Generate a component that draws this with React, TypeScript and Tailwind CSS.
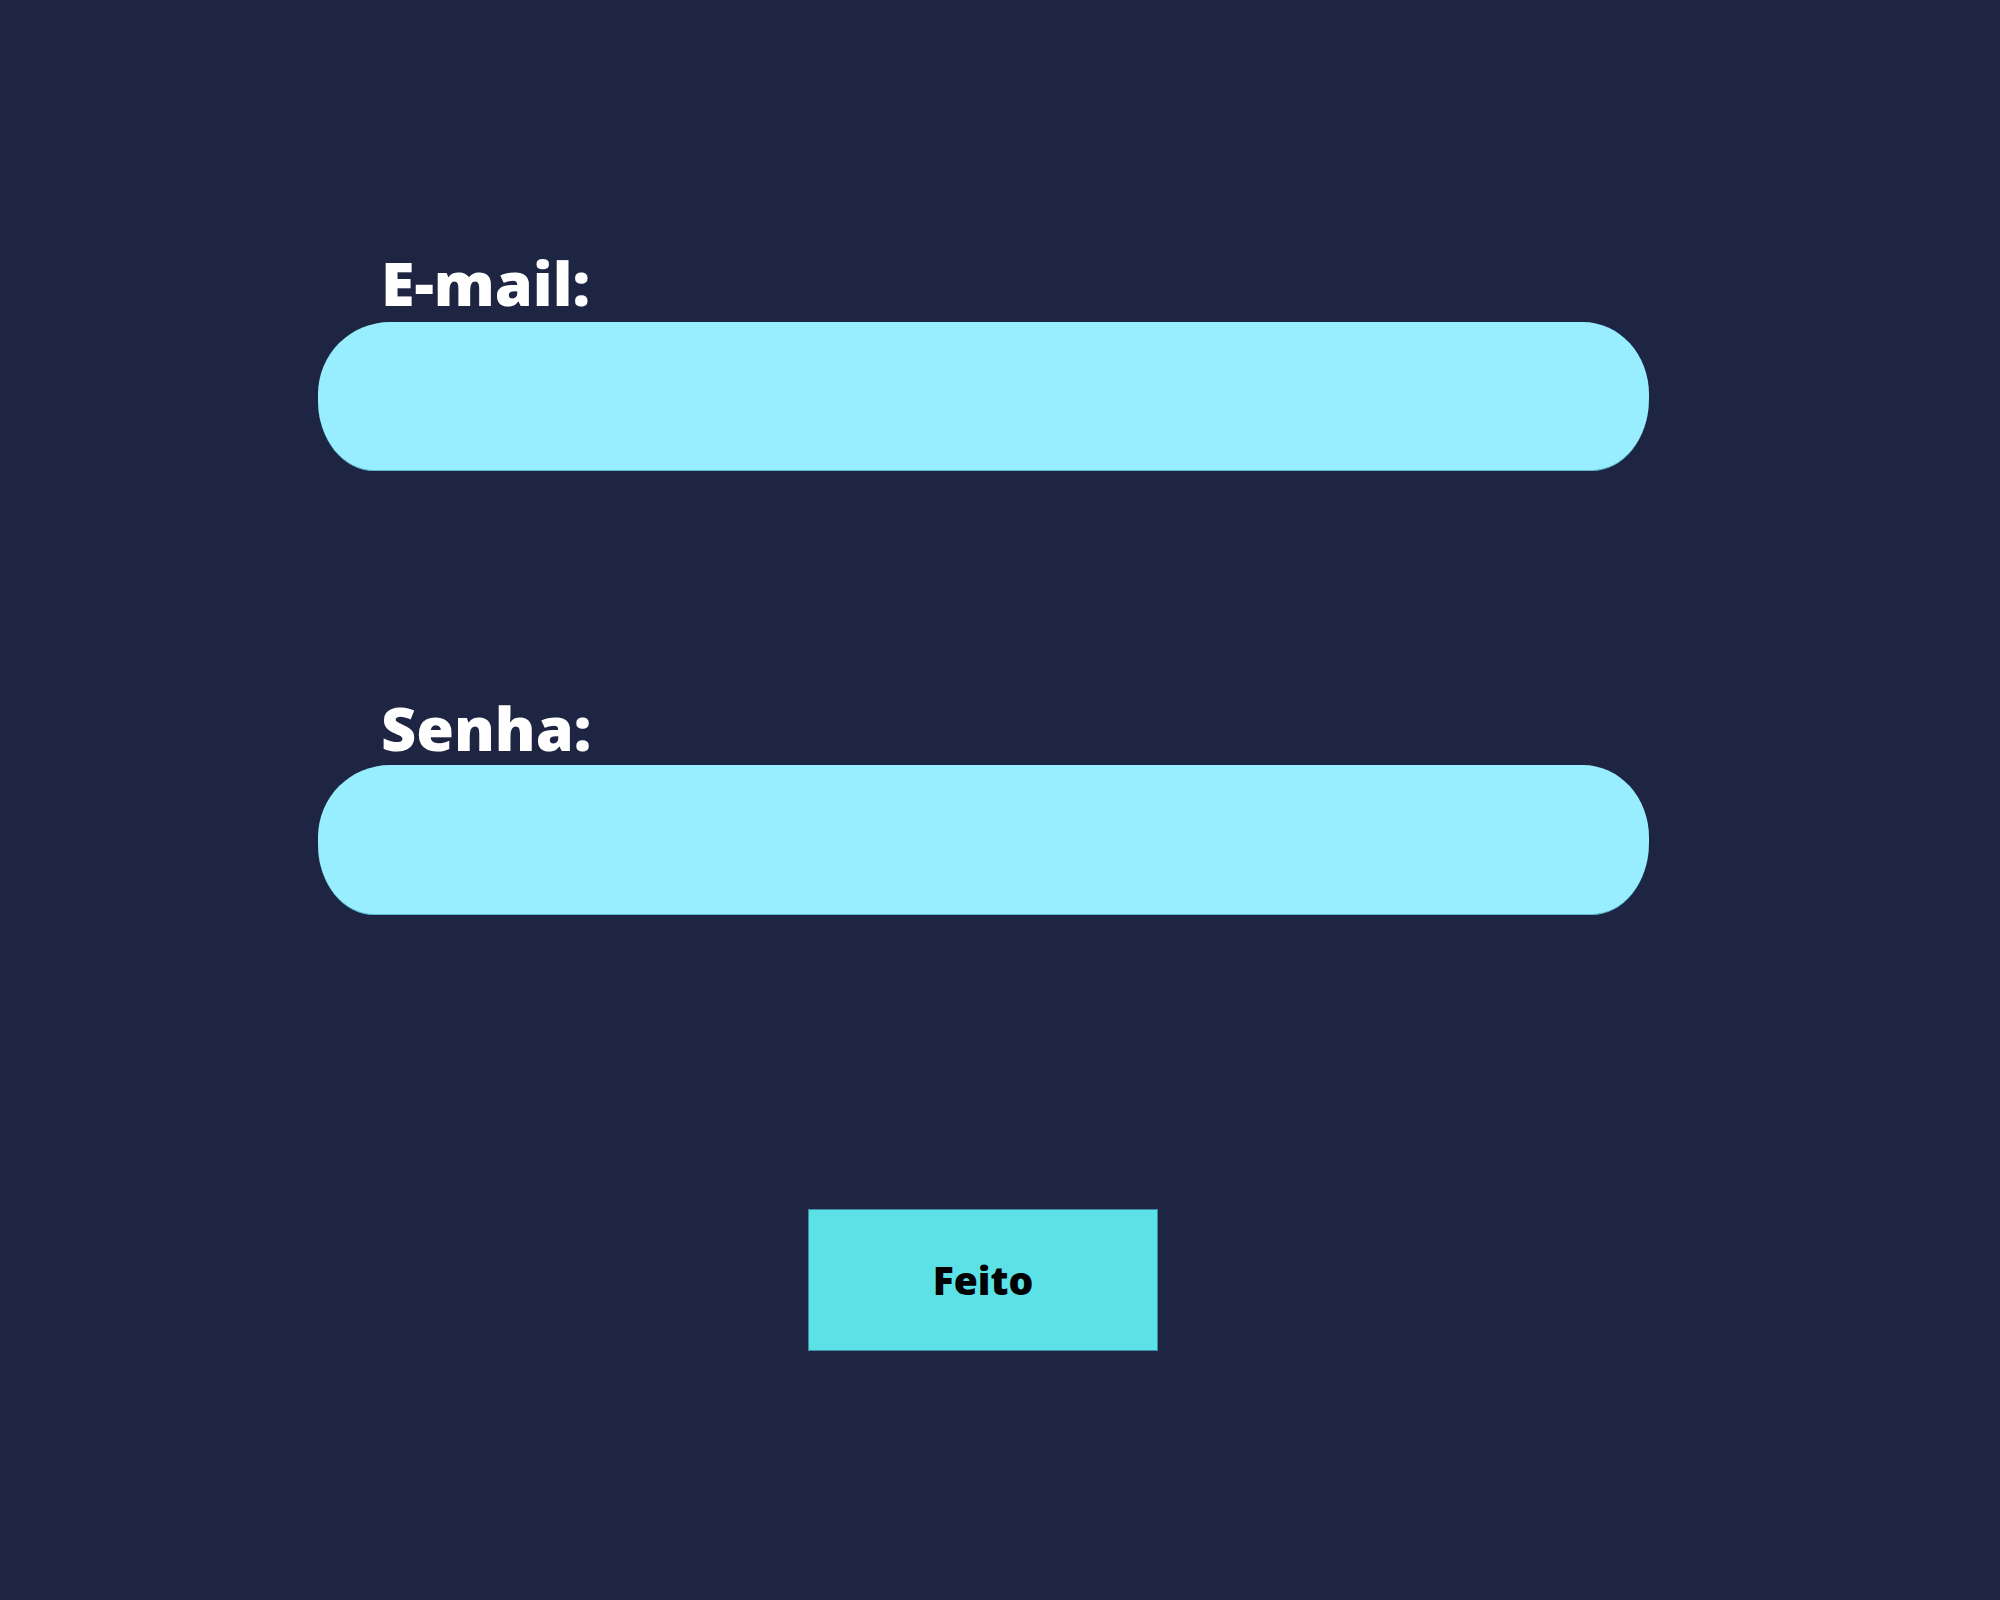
export default function App() {
  return (
    <div
      className="w-[2000px] h-[1600px] bg-[#1d2542] pt-[252px]"
      style={{ fontFamily: '"Open Sans", "Noto Sans", sans-serif' }}
    >
      <div className="ml-[318px] w-[1331px] flex flex-col">
        <label className="ml-[63px] text-[61px] leading-none font-extrabold text-white">E-mail:</label>
        <input
          type="email"
          className="mt-[9px] h-[149px] bg-[#98eeff] border-b border-[#5ab8c9] outline-none rounded-[72px_66px_57px_56px/72px_72px_72px_70px]"
        />

        <label className="mt-[226px] ml-[63px] text-[61px] leading-none font-extrabold text-white">Senha:</label>
        <input
          type="password"
          className="mt-[7px] h-[150px] bg-[#98eeff] border-b border-[#5ab8c9] outline-none rounded-[72px_66px_57px_56px/72px_72px_72px_70px]"
        />
      </div>

      <div className="flex justify-center mt-[294px]">
        <button className="ml-[-34px] w-[350px] h-[142px] bg-[#5ce1e6] border border-[#3b8fa3] text-black text-[39px] font-extrabold">
          Feito
        </button>
      </div>
    </div>
  );
}
